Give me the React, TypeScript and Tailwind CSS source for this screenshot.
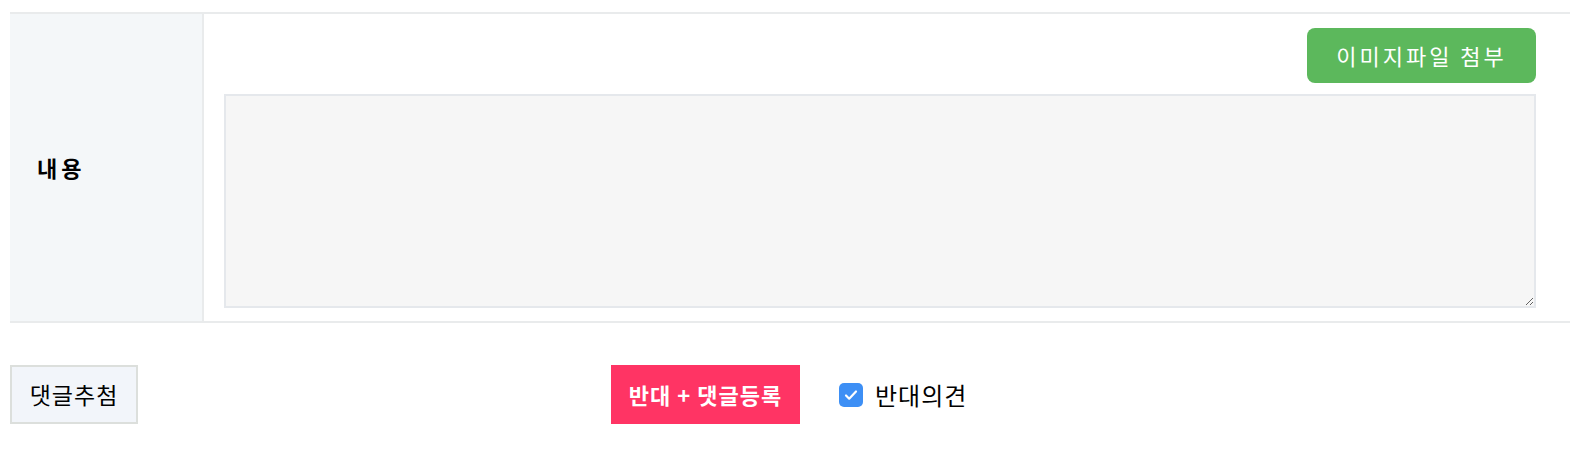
import { useState } from "react";

export default function App() {
    const [content, setContent] = useState("");
    const [oppose, setOppose] = useState(true);

    return (
        <div className="bg-white min-h-screen pt-[12px] px-[10px] pr-[12px]" style={{ fontFamily: '"Noto Sans CJK KR", "Noto Sans", sans-serif' }}>
            <div className="flex border-y-2 border-[#e9ebec]">
                <div className="w-[194px] shrink-0 bg-[#f4f7f9] border-r-2 border-[#e9ebec] flex items-center pl-[27px]">
                    <span className="text-[22px] font-bold tracking-[4px] text-black">내용</span>
                </div>
                <div className="flex-1 pt-[14px] pb-[13px] pl-[20px] pr-[34px] flex flex-col">
                    <div className="flex justify-end">
                        <button className="w-[229px] h-[55px] rounded-[8px] bg-[#5cb85c] text-white text-[22px] tracking-[3px]">
                            이미지파일 첨부
                        </button>
                    </div>
                    <textarea
                        value={content}
                        onChange={(e) => setContent(e.target.value)}
                        className="mt-[11px] h-[214px] w-full bg-[#f6f6f6] border-2 border-[#e5e8ec] outline-none p-2 resize-y"
                    />
                </div>
            </div>

            <div className="mt-[42px] flex items-center relative h-[59px]">
                <button className="h-[59px] w-[128px] bg-[#f2f5fa] border-2 border-[#dcdfdc] text-[23px] tracking-[1px] text-black">
                    댓글추첨
                </button>
                <div className="absolute left-[601px] top-0 flex items-center">
                    <button className="h-[59px] w-[189px] bg-[#ff3464] text-white text-[22px] font-bold tracking-[1px]">
                        반대 + 댓글등록
                    </button>
                    <label className="ml-[39px] flex items-center cursor-pointer select-none" onClick={() => setOppose(!oppose)}>
                        <span className={"w-[24px] h-[24px] rounded-[5px] flex items-center justify-center " + (oppose ? "bg-[#3d8ff5]" : "bg-white border border-gray-400")}>
                            {oppose && (
                                <svg width="16" height="16" viewBox="0 0 16 16" fill="none">
                                    <path d="M3 8.5l3.2 3.2L13 4.5" stroke="white" strokeWidth="2.2" strokeLinecap="round" strokeLinejoin="round" />
                                </svg>
                            )}
                        </span>
                        <span className="ml-[12px] text-[24px] tracking-[1px] text-black">반대의견</span>
                    </label>
                </div>
            </div>
        </div>
    );
}
